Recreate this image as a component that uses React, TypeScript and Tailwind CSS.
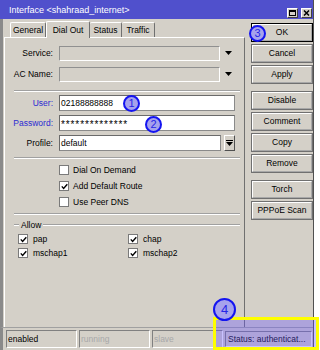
import React from "react";

const Btn = ({ label, def }: { label: string; def?: boolean }) => (
  <div
    className={
      def
        ? "h-[19px] border border-black bg-[#d4d0c8]"
        : "h-[19px] border border-[#707070] bg-[#d4d0c8]"
    }
  >
    <div className="w-full h-full flex items-center justify-center border-t border-l border-t-white border-l-white border-r border-b border-r-[#a8a8a8] border-b-[#a8a8a8] text-black leading-none">
      {label}
    </div>
  </div>
);

const Check = ({ checked }: { checked?: boolean }) => (
  <div className="w-[10px] h-[10px] shrink-0 bg-white border border-[#7a7a7a] flex items-center justify-center">
    {checked && (
      <svg width="7" height="7" viewBox="0 0 7 7">
        <path d="M0.8 3.4 L2.6 5.4 L6.3 1.2" stroke="#000" strokeWidth="1.4" fill="none" />
      </svg>
    )}
  </div>
);

const Sep = () => (
  <div className="ml-[9px] mr-[4px] h-[2px] border-t border-t-[#a0a0a0] border-b border-b-white" />
);

const Arrow = () => (
  <svg width="8" height="5" viewBox="0 0 8 5">
    <path d="M0 0 H7 L3.5 4 Z" fill="#000" />
  </svg>
);

const Badge = ({ n, className }: { n: string; className: string }) => (
  <div
    className={
      "absolute rounded-full border-[2px] border-[#1414f0] bg-[#a6a2ec] text-[#2626e6] flex items-center justify-center font-['Liberation_Sans',sans-serif] leading-none " +
      className
    }
  >
    {n}
  </div>
);

export default function App() {
  return (
    <div className="relative w-[320px] h-[350px] overflow-hidden bg-white font-['Liberation_Sans',Arial,sans-serif] text-[8.5px] text-black">
      <div className="flex flex-col w-[314px] h-[350px] bg-[#d4d0c8] border-r border-r-[#505050]">
        {/* Title bar */}
        <div className="h-[19px] bg-[#5050cc] flex items-end justify-between pl-[9px] pr-[1px] pb-[1px]">
          <span className="text-white text-[9px] leading-none pb-[3px]">Interface &lt;shahraad_internet&gt;</span>
          <div className="flex gap-[3px]">
            <div className="w-[11px] h-[10px] bg-[#d4d0c8] border border-t-white border-l-white border-b-[#404040] border-r-[#404040] flex items-center justify-center">
              <div className="w-[7px] h-[6px] border border-black border-t-2" />
            </div>
            <div className="w-[11px] h-[10px] bg-[#d4d0c8] border border-t-white border-l-white border-b-[#404040] border-r-[#404040] flex items-center justify-center">
              <svg width="7" height="6" viewBox="0 0 7 6">
                <path d="M1 0.5 L6 5.5 M6 0.5 L1 5.5" stroke="#000" strokeWidth="1.5" />
              </svg>
            </div>
          </div>
        </div>

        {/* Body */}
        <div className="flex h-[308px] border-l-[3px] border-l-[#8a8a8a]">
          {/* left section */}
          <div className="w-[242px] flex flex-col">
            {/* tabs */}
            <div className="h-[18px] flex items-end pl-[7px]">
              <div className="h-[15px] w-[36px] flex items-center justify-center border-t border-l border-t-white border-l-white border-r border-r-[#707070] rounded-t-[2px]">
                General
              </div>
              <div className="h-[17px] w-[44px] flex items-center justify-center border-t border-l border-t-white border-l-white border-r border-r-[#707070] rounded-t-[2px] bg-[#d4d0c8] relative top-[1px] z-10">
                Dial Out
              </div>
              <div className="h-[15px] w-[32px] flex items-center justify-center border-t border-t-white border-r border-r-[#707070] rounded-t-[2px]">
                Status
              </div>
              <div className="h-[15px] w-[33px] flex items-center justify-center border-t border-t-white border-r border-r-[#707070] rounded-t-[2px]">
                Traffic
              </div>
            </div>
            {/* panel */}
            <div className="flex-1 ml-[1px] border-t border-t-white border-l border-l-white border-r border-r-[#707070] flex flex-col">
              {/* Service */}
              <div className="mt-[8px] h-[15px] flex items-center">
                <div className="w-[48px] text-right">Service:</div>
                <div className="ml-[6px] w-[161px] h-[15px] border border-t-[#909090] border-l-[#909090] border-b-white border-r-white" />
                <div className="ml-[5px]"><Arrow /></div>
              </div>
              {/* AC Name */}
              <div className="mt-[6px] h-[15px] flex items-center">
                <div className="w-[48px] text-right">AC Name:</div>
                <div className="ml-[6px] w-[161px] h-[15px] border border-t-[#909090] border-l-[#909090] border-b-white border-r-white" />
                <div className="ml-[5px]"><Arrow /></div>
              </div>
              <div className="mt-[8px]"><Sep /></div>
              {/* User */}
              <div className="mt-[3px] h-[16px] flex items-center">
                <div className="w-[48px] text-right text-[#2a2ad2]">User:</div>
                <div className="ml-[6px] w-[176px] h-[16px] bg-white border border-[#8a8a8a] border-t-[#6a6a6a] border-l-[#6a6a6a] flex items-center pl-[1px]">
                  02188888888
                </div>
              </div>
              {/* Password */}
              <div className="mt-[4px] h-[16px] flex items-center">
                <div className="w-[48px] text-right text-[#2a2ad2]">Password:</div>
                <div className="ml-[6px] w-[176px] h-[16px] bg-white border border-[#8a8a8a] border-t-[#6a6a6a] border-l-[#6a6a6a] flex items-center pl-[1px] text-[10px] tracking-[0.9px] pt-[2px]">
                  **************
                </div>
              </div>
              {/* Profile */}
              <div className="mt-[4px] h-[16px] flex items-center">
                <div className="w-[48px] text-right">Profile:</div>
                <div className="ml-[6px] w-[162px] h-[16px] bg-white border border-[#8a8a8a] border-t-[#6a6a6a] border-l-[#6a6a6a] flex items-center pl-[1px]">
                  default
                </div>
                <div className="ml-[3px] w-[11px] h-[16px] border border-t-white border-l-white border-b-[#505050] border-r-[#505050] flex flex-col items-center justify-center gap-[1px]">
                  <div className="w-[7px] h-[1px] bg-black" />
                  <svg width="7" height="4" viewBox="0 0 7 4">
                    <path d="M0 0 H7 L3.5 4 Z" fill="#000" />
                  </svg>
                </div>
              </div>
              <div className="mt-[6px]"><Sep /></div>
              {/* checkboxes */}
              <div className="mt-[3px] flex flex-col pl-[54px]">
                <div className="h-[16px] flex items-center gap-[4px]"><Check /><span>Dial On Demand</span></div>
                <div className="h-[16px] flex items-center gap-[4px]"><Check checked /><span>Add Default Route</span></div>
                <div className="h-[16px] flex items-center gap-[4px]"><Check /><span>Use Peer DNS</span></div>
              </div>
              <div className="mt-[3px]"><Sep /></div>
              {/* Allow */}
              <div className="mt-[4px] h-[12px] flex items-center pl-[9px] pr-[4px]">
                <div className="w-[5px] h-[2px] border-t border-t-[#a0a0a0] border-b border-b-white" />
                <span className="px-[2px]">Allow</span>
                <div className="flex-1 h-[2px] border-t border-t-[#a0a0a0] border-b border-b-white" />
              </div>
              <div className="mt-[3px] grid grid-cols-[110px_1fr] pl-[13px] gap-y-[4px]">
                <div className="h-[10px] flex items-center gap-[5px]"><Check checked /><span>pap</span></div>
                <div className="h-[10px] flex items-center gap-[5px]"><Check checked /><span>chap</span></div>
                <div className="h-[10px] flex items-center gap-[5px]"><Check checked /><span>mschap1</span></div>
                <div className="h-[10px] flex items-center gap-[5px]"><Check checked /><span>mschap2</span></div>
              </div>
            </div>
          </div>
          {/* buttons column */}
          <div className="ml-[6px] w-[62px] flex flex-col pt-[4px]">
            <div className="flex flex-col gap-[2px]">
              <Btn label="OK" def />
              <Btn label="Cancel" />
              <Btn label="Apply" />
            </div>
            <div className="mt-[7px] flex flex-col gap-[2px]">
              <Btn label="Disable" />
              <Btn label="Comment" />
              <Btn label="Copy" />
              <Btn label="Remove" />
            </div>
            <div className="mt-[7px] flex flex-col gap-[2px]">
              <Btn label="Torch" />
              <Btn label="PPPoE Scan" />
            </div>
          </div>
        </div>

        {/* status bar */}
        <div className="h-[23px] flex items-center border-l-[3px] border-l-[#8a8a8a] border-t border-t-[#a0a0a0] pl-[3px] gap-[2px]">
          <div className="w-[71px] h-[18px] flex items-center pl-[1px] border border-t-[#808080] border-l-[#808080] border-b-white border-r-white">enabled</div>
          <div className="w-[71px] h-[18px] flex items-center pl-[1px] text-[#a8a8a8] border border-t-[#808080] border-l-[#808080] border-b-white border-r-white">running</div>
          <div className="w-[71px] h-[18px] flex items-center pl-[1px] text-[#a8a8a8] border border-t-[#808080] border-l-[#808080] border-b-white border-r-white">slave</div>
          <div className="w-[87px] h-[16px] flex items-center pl-[2px] border border-t-[#808080] border-l-[#808080] border-b-white border-r-white">Status: authenticat...</div>
        </div>
      </div>

      {/* yellow highlight */}
      <div className="absolute left-[213px] top-[317px] w-[106px] h-[33px] border-[3px] border-[#ffff00] bg-[rgba(100,80,255,0.35)]" />

      <Badge n="1" className="left-[123px] top-[95px] w-[17px] h-[17px] text-[11px]" />
      <Badge n="2" className="left-[145px] top-[116px] w-[17px] h-[17px] text-[11px]" />
      <Badge n="3" className="left-[249px] top-[25px] w-[17px] h-[17px] text-[11px]" />
      <Badge n="4" className="left-[213px] top-[298px] w-[23px] h-[23px] text-[13px]" />
    </div>
  );
}
